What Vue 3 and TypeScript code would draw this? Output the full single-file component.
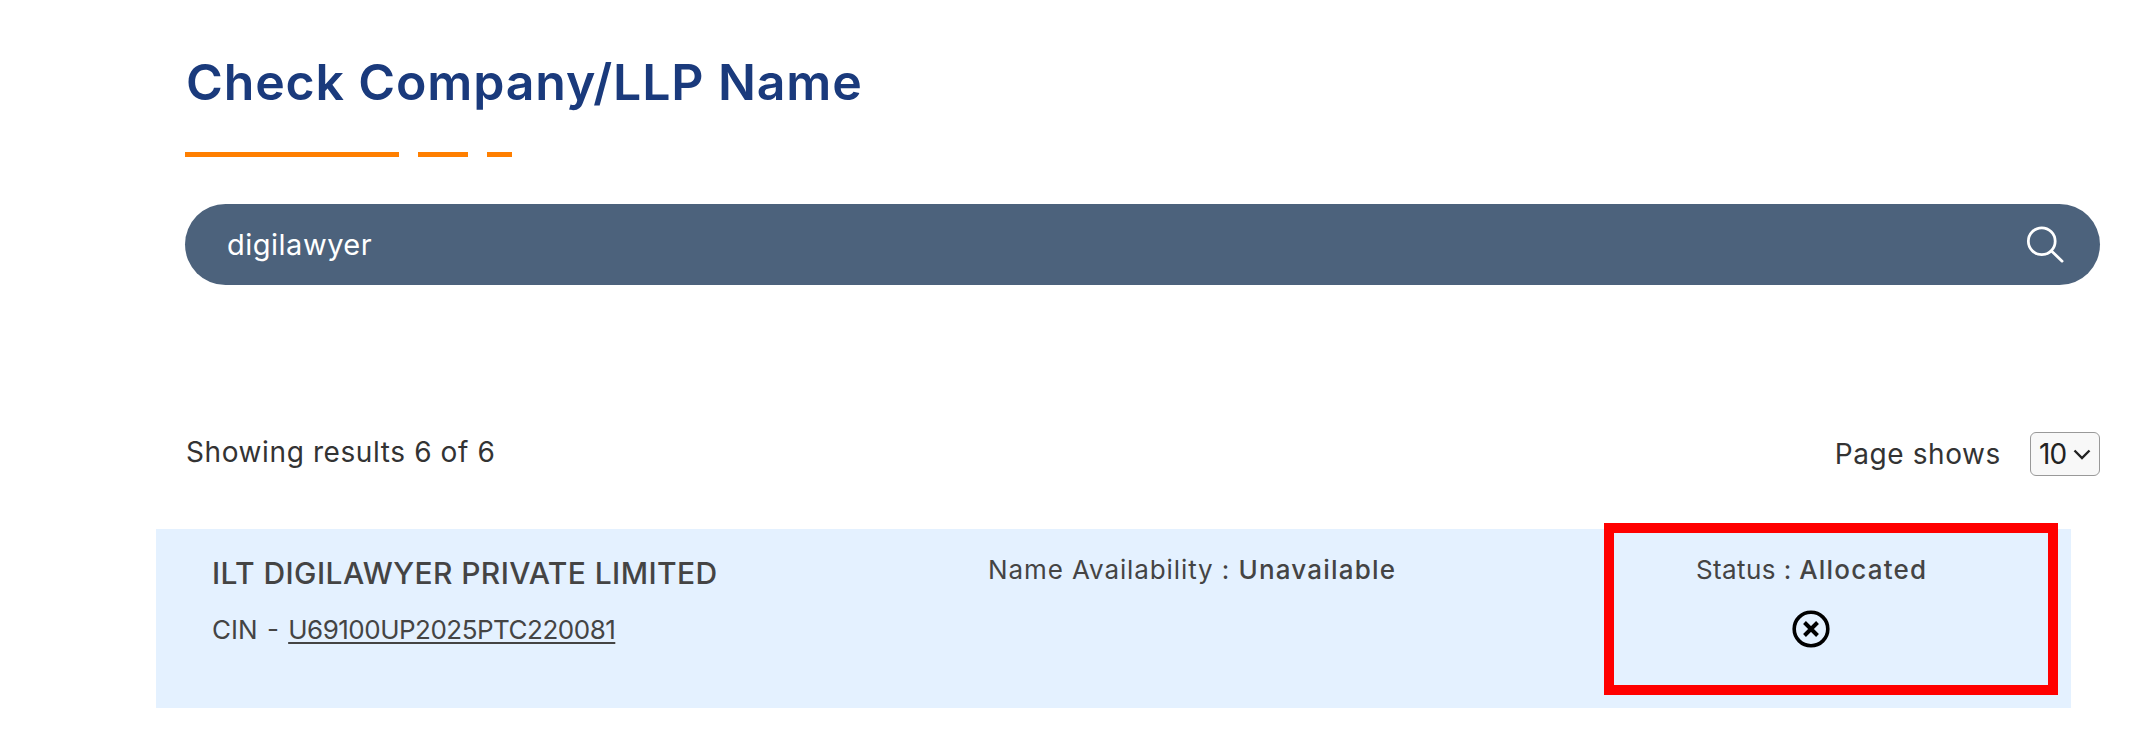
<script setup lang="ts">
  const results = [
    {
      name: 'ILT DIGILAWYER PRIVATE LIMITED',
      cin: 'U69100UP2025PTC220081',
      availability: 'Unavailable',
      status: 'Allocated',
    },
  ]
</script>

<template>
  <main class="page">
    <h1 class="title">Check Company/LLP Name</h1>
    <div class="rule">
      <span class="dash long"></span>
      <span class="dash mid"></span>
      <span class="dash short"></span>
    </div>

    <div class="search">
      <span class="query">digilawyer</span>
      <svg class="search-icon" viewBox="0 0 40 40" fill="none" stroke="#fff" stroke-width="3" stroke-linecap="round">
        <circle cx="16.5" cy="16.5" r="14.5" />
        <path d="M27 27 38.5 38" />
      </svg>
    </div>

    <div class="toolbar">
      <span class="count">Showing results 6 of 6</span>
      <label class="page-size">
        <span>Page shows</span>
        <span class="select-wrap">
          <select class="size-select">
            <option>10</option>
          </select>
          <svg class="chevron" viewBox="0 0 18 11" fill="none" stroke="#222" stroke-width="2.4">
            <path d="M1.5 1.5 9 9l7.5-7.5" />
          </svg>
        </span>
      </label>
    </div>

    <section v-for="item in results" :key="item.cin" class="result">
      <div class="col-name">
        <div class="name">{{ item.name }}</div>
        <div class="cin">CIN - <a class="cin-link">{{ item.cin }}</a></div>
      </div>
      <div class="col-avail">Name Availability : <b>{{ item.availability }}</b></div>
      <div class="col-status">
        <div>Status : <b>{{ item.status }}</b></div>
        <svg class="x-icon" viewBox="0 0 38 38" fill="none" stroke="#000">
          <circle cx="19" cy="19" r="16.8" stroke-width="3.6" />
          <path d="M12.5 12.5 25.5 25.5M25.5 12.5 12.5 25.5" stroke-width="4" />
        </svg>
      </div>
      <div class="highlight"></div>
    </section>
  </main>
</template>

<style>
  body {
    background: #fff;
  }
</style>

<style scoped>
  .page {
    width: 1915px;
    margin-left: 185px;
    font-family: Inter, "Open Sans", sans-serif;
    color: #444;
  }
  .title {
    margin: 0;
    padding: 51px 0 0 1px;
    font-size: 50px;
    line-height: 62px;
    font-weight: 600;
    letter-spacing: 0.85px;
    color: #1a3a7c;
  }
  .rule {
    display: flex;
    gap: 19px;
    margin-top: 39px;
  }
  .dash {
    height: 5px;
    background: #ff7f00;
  }
  .long { width: 214px; }
  .mid { width: 50px; }
  .short { width: 25px; }
  .search {
    display: flex;
    align-items: center;
    justify-content: space-between;
    height: 81px;
    margin-top: 47px;
    padding: 0 0 0 42px;
    border-radius: 41px;
    background: #4c627c;
    color: #fff;
  }
  .query {
    font-size: 29px;
    letter-spacing: 0.5px;
  }
  .search-icon {
    width: 38px;
    height: 37px;
    margin-right: 36px;
  }
  .toolbar {
    display: flex;
    align-items: center;
    justify-content: space-between;
    height: 44px;
    margin-top: 147px;
    font-size: 28px;
    letter-spacing: 0.6px;
    color: #333;
  }
  .count {
    margin: -5px 0 0 1px;
  }
  .page-size {
    display: flex;
    align-items: center;
    gap: 29px;
  }
  .select-wrap {
    position: relative;
    display: flex;
  }
  .size-select {
    width: 70px;
    height: 44px;
    padding: 0 0 0 8px;
    border: 1px solid #999;
    border-radius: 6px;
    background-color: #f8f8f8;
    appearance: none;
    font-family: inherit;
    font-size: 28px;
    letter-spacing: -1px;
    color: #222;
  }
  .chevron {
    position: absolute;
    top: 17px;
    right: 9px;
    width: 18px;
    height: 11px;
    pointer-events: none;
  }
  .result {
    position: relative;
    display: flex;
    width: 1915px;
    height: 179px;
    margin: 53px 0 0 -29px;
    padding: 0 0 0 56px;
    box-sizing: border-box;
    background: #e4f1ff;
    font-size: 26px;
  }
  .col-name {
    width: 776px;
    padding-top: 25px;
  }
  .name {
    font-size: 30px;
    line-height: 38px;
    font-weight: 500;
    letter-spacing: 0.4px;
  }
  .cin {
    margin-top: 20px;
    line-height: 36px;
    word-spacing: 2px;
  }
  .cin-link {
    letter-spacing: -0.5px;
    text-decoration: underline;
    text-underline-offset: 3px;
  }
  .col-avail {
    width: 708px;
    padding-top: 25px;
    letter-spacing: 0.9px;
  }
  .col-status {
    display: flex;
    flex-direction: column;
    align-items: flex-start;
    padding-top: 25px;
    letter-spacing: 0.4px;
  }
  .col-avail b,
  .col-status b {
    font-weight: 500;
    letter-spacing: 1.2px;
  }
  .x-icon {
    width: 38px;
    height: 38px;
    margin: 25px 0 0 96px;
  }
  .highlight {
    position: absolute;
    top: -6px;
    left: 1448px;
    width: 454px;
    height: 172px;
    box-sizing: border-box;
    border: 10px solid #f00;
  }
</style>
